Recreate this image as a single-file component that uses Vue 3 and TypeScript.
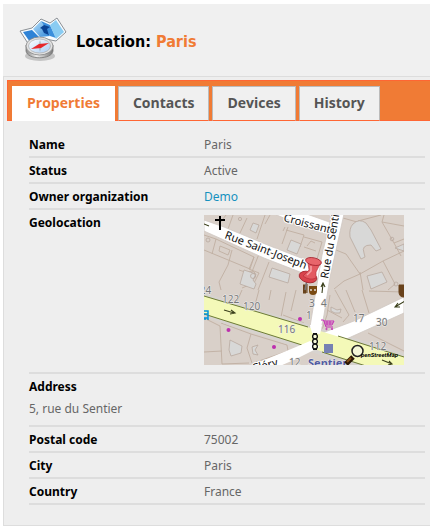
<script setup lang="ts">
import { ref } from 'vue'

const tabs: string[] = ['Properties', 'Contacts', 'Devices', 'History']
const active = ref<string>('Properties')

interface HouseNumber { x: number; y: number; n: string }
const houseNumbers: HouseNumber[] = [
  { x: -10, y: 79, n: '124' },
  { x: 18, y: 88, n: '122' },
  { x: 39, y: 95, n: '120' },
  { x: 74, y: 118, n: '116' },
  { x: 105, y: 92, n: '3' },
  { x: 117, y: 92, n: '4' },
  { x: 102, y: 104, n: '1' },
  { x: 149, y: 107, n: '17' },
  { x: 172, y: 111, n: '30' },
  { x: 165, y: 135, n: '112' },
  { x: 85, y: 151, n: '12' },
]
</script>

<template>
  <main class="page">
    <header class="head">
      <svg class="logo" viewBox="0 0 50 50" aria-hidden="true">
        <defs>
          <linearGradient id="sheet" x1="0" y1="0" x2="1" y2="1">
            <stop offset="0" stop-color="#b9e2fa" /><stop offset="1" stop-color="#2f86d8" />
          </linearGradient>
          <linearGradient id="dial" x1="0" y1="0" x2="1" y2="1">
            <stop offset="0" stop-color="#ffffff" /><stop offset="1" stop-color="#a9cdf5" />
          </linearGradient>
          <linearGradient id="metal" x1="0" y1="0" x2="1" y2="0">
            <stop offset="0" stop-color="#888" /><stop offset="0.4" stop-color="#eee" /><stop offset="1" stop-color="#777" />
          </linearGradient>
        </defs>
        <path d="M2 14 14 11 23 2 32 6 39 1 48 15 38 24 22 21 11 28Z" fill="#f8fcff" stroke="#8a8f94" stroke-width="1" />
        <path d="M5 15 14 13 21 20 12 25Z" fill="#2f83d6" />
        <path d="M15 12 23 4 32 19 22 20Z" fill="url(#sheet)" />
        <path d="M23 4 32 8 38 21 32 19Z" fill="#3b8fdc" />
        <path d="M32 8 38 3 46 15 38 22Z" fill="#8accf2" />
        <path d="M22 11 26 8 32 10 29 12 31 18 26 16 24 12Z" fill="#0b4494" />
        <ellipse cx="22" cy="39" rx="15" ry="5" fill="#c4c4c4" />
        <path d="M8 28V34C9 43 34 43 35 34V28Z" fill="url(#metal)" stroke="#777" stroke-width="0.8" />
        <ellipse cx="21.5" cy="29" rx="13.5" ry="9" fill="#e2e2e2" stroke="#888" stroke-width="0.8" />
        <ellipse cx="21.5" cy="29" rx="11" ry="7" fill="url(#dial)" stroke="#aaa" stroke-width="0.7" />
        <path d="M22 23 24 29 22 35 20 29Z" fill="#9aa" opacity="0.6" />
        <path d="M13 32 21 27 31 26 23 31Z" fill="#e6262b" />
      </svg>
      <h1 class="title">Location: <span class="accent">Paris</span></h1>
    </header>

    <section class="panel">
      <div class="tabs" role="tablist">
        <button
          v-for="tab in tabs"
          :key="tab"
          type="button"
          role="tab"
          class="tab"
          :class="{ active: tab === active }"
          :aria-selected="tab === active"
          @click="active = tab"
        >{{ tab }}</button>
      </div>

      <dl class="details">
        <div class="row"><dt>Name</dt><dd>Paris</dd></div>
        <div class="row"><dt>Status</dt><dd>Active</dd></div>
        <div class="row"><dt>Owner organization</dt><dd><a href="#demo">Demo</a></dd></div>
        <div class="row geo">
          <dt>Geolocation</dt>
          <dd>
            <svg class="map" viewBox="0 0 200 150" role="img" aria-label="Map of Paris">
              <rect width="200" height="150" fill="#d9d0c9" />
              <!-- building outlines -->
              <g fill="none" stroke="#bfafa2" stroke-width="0.9">
                <path d="M22 0 16 8M29 0 24 14M43 3 36 18M61 0 53 24M84 12 78 29M66 0 61 9M82 15 100 20M81 12 79 16" />
                <path d="M0 20 12 24 8 39M12 24 50 42 46 54 0 35M28 35 24 50 15 67 17 75M50 42 45 54 55 58M55 39 42 72M65 47 54 75M55 58 50 68 38 73M35 55 50 60" />
                <path d="M16 31 26 35 24 40 15 36ZM45 57Q50 54 51 59T46 65M100 20 96 32" />
                <path d="M100 22 118 27 113 44M100 32 112 36M103 31 107 26 111 28M139 3 153 7M154 6 177 0M132 35 142 39 156 59M180 0 178 7 200 11M178 7 190 28 197 41" />
                <path d="M156 59 140 66 130 74M156 57 159 75M156 59 179 46 200 36M179 46 191 69 184 75M190 28 200 24" />
                <path d="M38 75 32 89M55 75 51 90M67 75 65 85M82 77 77 102M92 75 87 96M79 100 100 108" />
                <path d="M0 103 16 111 18 149M0 137 18 136M17 108 47 119 43 133 48 148M47 119 83 130 84 136 52 147M18 149 45 148" />
                <path d="M126 80 123 100 118 115M131 75 145 100 139 107M158 75 165 98M142 75 151 97M123 95 138 103M165 76 200 77M164 118 200 136" />
              </g>
              <g fill="#d8d8d7" stroke="#b9aaa0" stroke-width="0.8">
                <path d="M49 8 55 10 52 18 46 15ZM87 25 97 29 93 39 83 35ZM40 55 52 59 49 65 52 69 50 74 36 69ZM68 53 86 59 84 68 65 62Z" />
                <path d="M149 9Q155 3 162 8L167 15 177 34 172 36 167 30Q157 30 160 38L161 42 157 44 146 22Q145 13 149 9ZM163 61 178 57 183 67 167 74Z" />
                <path d="M26 125 38 131 37 138 27 141 25 135ZM48 132 54 130 51 135 54 140 49 139ZM127 92 133 95 137 94 136 98 131 98 127 96ZM200 29 191 33 200 36Z" />
              </g>
              <g fill="none" stroke="#b9aaa0" stroke-width="0.8">
                <circle cx="36" cy="4" r="1.6" /><circle cx="4" cy="25" r="2" /><circle cx="49" cy="61" r="2.5" /><circle cx="188" cy="24" r="1.8" /><circle cx="192" cy="69" r="2" />
              </g>
              <!-- streets -->
              <path d="M0 78 100 108 200 138V154H160L98 134 0 102Z" fill="#d7d3cf" />
              <g fill="#fff" stroke="#cfc8c3" stroke-width="0.8">
                <path d="M0 5 20 12 66 31 118 51 114 64 60 43 0 16Z" />
                <path d="M68-2 100-2 128 8 125 20 101 12Z" />
                <path d="M128-1 140-1 126 62 120 100 116 120 105 118 112 75 118 40Z" />
                <path d="M118 118 150 106 200 82V98L138 126 118 130Z" />
              </g>
              <path d="M0 81 100 111 200 142V151H163L98 130 0 99Z" fill="#f4f9b8" />
              <path d="M0 81 104 112M134 121 200 142M0 99 98 130M118 137 162 151" fill="none" stroke="#6d7c35" />
              <path d="M106 110H118L116 119 108 118Z" fill="#fff" />
              <path d="M92 132 106 126 116 132 92 144 76 151H46Z" fill="#fff" />
              <g fill="none" stroke="#3b401c" stroke-width="1.1">
                <path d="M20 95 30 98M27 95 31 98 26 99" /><path d="M178 145 188 149M185 146 188 149 184 150" />
                <path d="M201 86 191 92M194 88 191 92 196 92M118 78 119 69M117 72 119 68 121 72M0 9 5 11" />
              </g>
              <!-- street names -->
              <g class="street">
                <text transform="translate(20 23) rotate(21)">Rue Saint-Joseph</text>
                <text transform="translate(79 6) rotate(15)">Croissant</text>
                <text transform="translate(124 64) rotate(-80)">Rue du Sentier</text>
                <text transform="translate(49 157) rotate(-14)">Cléry</text>
              </g>
              <g class="number">
                <text v-for="h in houseNumbers" :key="h.n" :x="h.x" :y="h.y">{{ h.n }}</text>
              </g>
              <text class="station" x="104" y="152">Sentier</text>
              <!-- markers -->
              <path d="M16 1V15M11 5H21" stroke="#000" stroke-width="2" />
              <g fill="#bd2fae"><circle cx="24.5" cy="115" r="2" /><circle cx="96" cy="104" r="2" /><circle cx="70" cy="132" r="2" /></g>
              <rect x="120" y="129" width="9" height="9" fill="#7681b3" />
              <g fill="none" stroke="#c52fb6" stroke-width="1">
                <path d="M117 105H119.500L122 112H129M120 106H130L128 110H121.500M121 108H129M123 106V110M126 106V110" />
                <circle cx="122.500" cy="114" r="0.7" /><circle cx="128" cy="114" r="0.7" />
              </g>
              <path d="M-2 96H4V103H-2M-2 99H4M1 103V105M4 103V105" fill="none" stroke="#0092da" stroke-width="1.5" />
              <g fill="#f8fbdc" stroke="#111" stroke-width="1.3"><circle cx="111" cy="121.500" r="2.400" /><circle cx="111" cy="126.500" r="2.400" /><circle cx="111" cy="131.500" r="2.400" /></g>
              <path d="M109 118.500H113M109 134.500H113" stroke="#111" />
              <path d="M99 70H102V78H99M103 69V78M195 70H200V82Q195 82 195 77Z" fill="#69421b" stroke="#69421b" />
              <path d="M105 71H113V76Q113 80 109 80T105 76Z" fill="#7a4a12" /><circle cx="107" cy="75" r="0.9" fill="#eee" /><circle cx="111" cy="75" r="0.9" fill="#eee" />
              <!-- push pin -->
              <path d="M103 65 101 75" stroke="#777" stroke-width="1.5" />
              <ellipse cx="104" cy="62" rx="9" ry="5.500" transform="rotate(15 104 62)" fill="#d9434c" stroke="#a4222c" stroke-width="0.8" />
              <path d="M104 48 105 55 99 61Q106 66 112 63L112 57 116 49Z" fill="#e35a61" stroke="#b22b35" stroke-width="0.6" />
              <ellipse cx="109.500" cy="46.500" rx="8" ry="3.700" transform="rotate(12 109.500 46.500)" fill="#e8656b" stroke="#a4222c" stroke-width="0.8" />
              <path d="M107 51V56L103 60" fill="none" stroke="#f6a3a6" stroke-width="1.500" />
              <!-- map credit -->
              <path d="M149 142 142 149" stroke="#2b1603" stroke-width="5" /><path d="M147 143 143 147" stroke="#875016" stroke-width="2" />
              <circle cx="153.500" cy="136" r="5.500" fill="#f4f6df" fill-opacity="0.8" stroke="#222" stroke-width="1.500" />
              <text class="credit" x="157" y="142">penStreetMap</text>
            </svg>
          </dd>
        </div>
        <div class="row stacked"><dt>Address</dt><dd>5, rue du Sentier</dd></div>
        <div class="row"><dt>Postal code</dt><dd>75002</dd></div>
        <div class="row"><dt>City</dt><dd>Paris</dd></div>
        <div class="row"><dt>Country</dt><dd>France</dd></div>
      </dl>
    </section>
  </main>
</template>

<style>
body { margin: 0; background: #fff; }
</style>

<style scoped>
.page { padding: 4px 0 5px 3px; font-family: "Noto Sans", "Open Sans", sans-serif; color: #000; }
.head { display: flex; align-items: center; gap: 8px; box-sizing: border-box; height: 72px; padding: 3px 0 0 15px; background: #f0f0f0; }
.logo { width: 50px; height: 50px; }
.title { margin: 0; font-family: "DejaVu Sans Condensed", "DejaVu Sans", sans-serif; font-size: 16px; line-height: 20px; font-weight: 700; }
.accent { color: #f07b35; }
.panel { border: 1px solid #ddd; border-right: 0; background: #eee; padding: 3px 0 20px 3px; }
.tabs { display: flex; gap: 3px; height: 35px; padding: 5px 0 0 4px; background: #f07b35; border: 1px solid #ff6633; border-right: 0; border-bottom: 0; box-shadow: inset 0 -1px #ff6633; }
.tab { margin: 0; padding: 0 14px 2px; border: 1px solid #bbb; border-bottom: 1px solid #ff6633; background: #f0f0f0; color: #555; font-family: "Open Sans", sans-serif; font-size: 14px; line-height: 20px; font-weight: 700; cursor: pointer; }
.tab.active { background: #fff; border-color: #fff; color: #f07b35; }
.details { margin: 0; padding: 11px 5px 0 22px; font-size: 12px; line-height: 16px; }
.row { display: grid; grid-template-columns: 175px 1fr; padding: 5px 0 3px; border-bottom: 2px solid #ddd; }
.row dt { font-weight: 700; }
.row dd { margin: 0; color: #666; }
.row a { color: #1591bf; text-decoration: none; }
.geo { padding-bottom: 7px; }
.stacked { grid-template-columns: 1fr; gap: 6px; padding-bottom: 8px; }
.map { display: block; width: 200px; height: 150px; }
.street text { font: 11px "Noto Sans", sans-serif; fill: #111; stroke: #fff; stroke-width: 2px; paint-order: stroke; }
.number text { font: 10px "Noto Sans", sans-serif; fill: #777; stroke: #eee; stroke-width: 1px; paint-order: stroke; }
.station { font: 700 11px "Noto Sans", sans-serif; fill: #535da3; stroke: #eee; stroke-width: 1px; paint-order: stroke; }
.credit { font: italic 700 6px Roboto, sans-serif; fill: #000; }
</style>
